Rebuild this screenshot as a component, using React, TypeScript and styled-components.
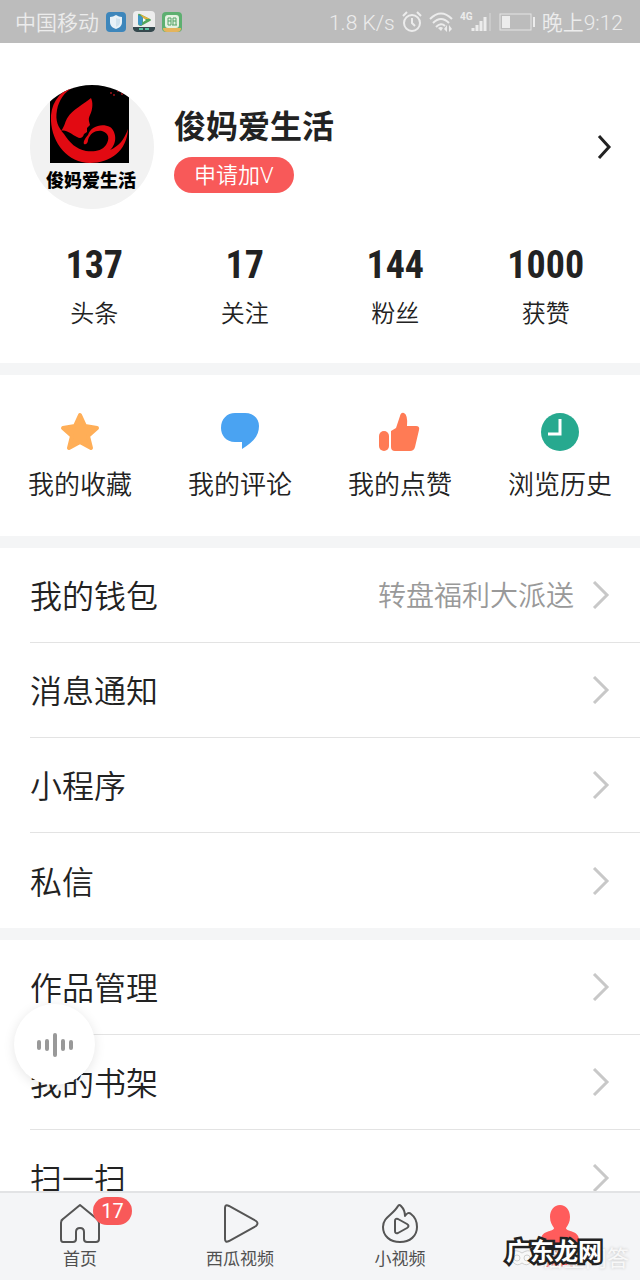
import React from 'react';
import styled, { createGlobalStyle } from 'styled-components';

const GlobalStyle = createGlobalStyle`
  *, *::before, *::after { box-sizing: border-box; }
  body {
    margin: 0;
    background: #fff;
    color: #222;
    font-family: Roboto, 'Noto Sans CJK SC', sans-serif;
  }
  button { font: inherit; color: inherit; border: 0; padding: 0; background: none; cursor: pointer; }
  a { color: inherit; text-decoration: none; }
  h1, p, ul, dl, dd { margin: 0; padding: 0; }
  ul { list-style: none; }
  svg { display: block; flex: none; }
`;

const Screen = styled.div`
  display: flex;
  flex-direction: column;
  height: 100vh;
  overflow: hidden;
`;

const StatusBar = styled.header`
  display: flex;
  align-items: center;
  justify-content: space-between;
  flex: none;
  height: 43px;
  padding: 0 17px 0 15px;
  background: #bcbcbc;
  color: #ececec;
  font-size: 21px;
  line-height: 28px;
  font-weight: 350;
`;

const StatusGroup = styled.div<{ $gap: number }>`
  display: flex;
  align-items: center;
  gap: ${(p) => p.$gap}px;
`;

const StatusText = styled.span`
  padding-top: 2px;
`;

const Content = styled.main`
  flex: 1;
  min-height: 0;
  overflow-y: auto;
  scrollbar-width: none;
  background: #f4f5f6;
`;

const Panel = styled.section`
  background: #fff;
  margin-bottom: 12px;
`;

const ProfilePanel = styled(Panel)`
  height: 320px;
  padding-top: 42px;
`;

const ProfileLink = styled.a`
  display: flex;
  align-items: center;
  padding: 0 28px 0 30px;
`;

const Identity = styled.div`
  flex: 1;
  margin-left: 20px;
`;

const UserName = styled.h1`
  padding-top: 4px;
  font-size: 32px;
  line-height: 44px;
  font-weight: 700;
`;

const ApplyButton = styled.button`
  display: block;
  height: 36px;
  margin-top: 8px;
  padding: 2px 20px 0;
  border-radius: 18px;
  background: #f85959;
  color: #fff;
  font-size: 22px;
  line-height: 34px;
  font-weight: 350;
`;

const Stats = styled.dl`
  display: grid;
  grid-template-columns: repeat(4, 1fr);
  padding: 0 19px;
  margin-top: 32px;
  text-align: center;
`;

const Stat = styled.div`
  display: flex;
  flex-direction: column-reverse;
`;

const StatLabel = styled.dt`
  font-size: 24px;
  line-height: 36px;
  font-weight: 350;
  margin-top: 7px;
`;

const StatValue = styled.dd`
  font-family: 'Roboto Condensed', Roboto, sans-serif;
  font-size: 38px;
  line-height: 48px;
  font-weight: 700;
`;

const Shortcuts = styled(Panel)`
  display: grid;
  grid-template-columns: repeat(4, 1fr);
  height: 161px;
`;

const Shortcut = styled.button`
  display: flex;
  flex-direction: column;
  align-items: center;
  padding-top: 36px;
  font-size: 26px;
  line-height: 40px;
  font-weight: 350;
  gap: 12px;
`;

const Menu = styled.ul`
  background: #fff;
  margin-bottom: 12px;
`;

const MenuItem = styled.li`
  padding-left: 30px;
  &:not(:last-child) a { border-bottom: 1px solid #e3e3e3; }
`;

const MenuLink = styled.a`
  display: flex;
  align-items: center;
  height: 95px;
  padding-right: 30px;
  font-size: 32px;
  line-height: 48px;
  font-weight: 350;
`;

const MenuTitle = styled.span`
  flex: 1;
  padding-top: 4px;
`;

const MenuHint = styled.span`
  padding-top: 4px;
  color: #999;
  font-size: 28px;
  margin-right: 18px;
`;

const TabBar = styled.nav`
  position: relative;
  display: grid;
  grid-template-columns: repeat(4, 1fr);
  flex: none;
  height: 89px;
  border-top: 2px solid #e2e3e5;
  background: #f4f5f7;
`;

const Tab = styled.a<{ $active?: boolean }>`
  display: flex;
  flex-direction: column;
  align-items: center;
  padding-top: 9px;
  gap: 2px;
  font-size: 17px;
  line-height: 26px;
  color: ${(p) => (p.$active ? '#f85959' : '#505050')};
`;

const TabIcon = styled.span`
  position: relative;
`;

const Badge = styled.span`
  position: absolute;
  left: 34px;
  top: -5px;
  width: 39px;
  height: 28px;
  border-radius: 14px;
  background: #f85959;
  color: #fff;
  font-size: 20px;
  line-height: 28px;
  text-align: center;
`;

const VoiceButton = styled.button`
  position: fixed;
  left: 14px;
  bottom: 195px;
  display: grid;
  place-items: center;
  width: 81px;
  height: 81px;
  border-radius: 50%;
  background: #fff;
  box-shadow: 0 2px 12px rgba(0, 0, 0, 0.1);
`;

const SiteMark = styled.span`
  position: absolute;
  right: 38px;
  bottom: 11px;
  color: #fff;
  font-size: 24px;
  line-height: 34px;
  font-weight: 700;
  -webkit-text-stroke: 5px #222;
  paint-order: stroke fill;
`;

const SourceMark = styled.span`
  position: absolute;
  right: 11px;
  bottom: 5px;
  display: flex;
  align-items: center;
  gap: 6px;
  color: #f8f8f8;
  font-size: 22px;
  line-height: 32px;
  text-shadow: 0 0 3px #c4c4c4;
`;

const Avatar = () => (
  <svg width="124" height="124" viewBox="0 0 124 124" role="img" aria-label="俊妈爱生活">
    <defs>
      <clipPath id="round"><circle cx="62" cy="62" r="62" /></clipPath>
      <clipPath id="photo"><rect x="20" y="0" width="79" height="78" /></clipPath>
    </defs>
    <g clipPath="url(#round)">
      <rect width="124" height="124" fill="#f2f2f2" />
      <g clipPath="url(#photo)">
        <rect width="124" height="78" fill="#000" />
        <path d="M42 1C28 8 20 20 21 36C22 58 38 78 60 78C80 78 97 66 98 44C94 55 89 61 80 65C88 58 86 46 80 42C72 38 61 41 58 50C55 53 53 57 54 59C56 60 58 58 58 55C60 48 66 45 72 46C79 48 80 54 76 60C72 66 64 67 56 66C46 64 40 58 34 49C28 42 25 36 27 25C29 15 34 7 44 2Z" fill="#e20a12" />
        <path d="M61 13C54 19 42 25 38 32C35 36 35 41 31 46C36 44 41 49 47 52C50 54 53 53 54 49L57 47L57 43L60 40C59 36 58 34 60 30C63 24 63 17 61 13Z" fill="#e20a12" />
        <g fill="#9e1018"><circle cx="81" cy="8" r="1" /><circle cx="84" cy="10" r="1" /><circle cx="88" cy="6" r="1" /><circle cx="92" cy="9" r="1" /></g>
      </g>
      <text x="61" y="102" textAnchor="middle" fontSize="18" fontWeight="900" fill="#000" fontFamily="'Noto Sans CJK SC', sans-serif">俊妈爱生活</text>
    </g>
  </svg>
);

const Chevron = ({ dark }: { dark?: boolean }) =>
  dark ? (
    <svg width="16" height="26" viewBox="0 0 16 26" fill="none" stroke="#222" strokeWidth="3"><path d="M3 2L13 13L3 24" /></svg>
  ) : (
    <svg width="18" height="28" viewBox="0 0 18 28" fill="none" stroke="#c8c8c8" strokeWidth="3"><path d="M2 1L15 14L2 27" /></svg>
  );

const ShieldApp = () => (
  <svg width="20" height="20" viewBox="0 0 20 20">
    <rect width="20" height="20" rx="4" fill="#3d86bb" />
    <path d="M10 3Q13 5 16 5V10C16 14 13 16 10 17C7 16 4 14 4 10V5Q7 5 10 3Z" fill="#e8f2f8" />
    <path d="M10 6Q12 7 14 7V10C14 13 12 14 10 15Z" fill="#cfe2ee" />
  </svg>
);

const VideoApp = () => (
  <svg width="22" height="21" viewBox="0 0 22 21">
    <rect width="22" height="21" rx="4" fill="#ededed" />
    <path d="M5 4Q5 2 7 3L17 8Q19 9 17 10L8 15Q5 15 5 12Z" fill="#53a65a" />
    <path d="M5 4L10 6L9 14Q5 15 5 12Z" fill="#3e96c6" />
    <path d="M7 3L17 8L11 8Z" fill="#e0b23c" />
    <path d="M10 7L13 9L10 11Z" fill="#fff" />
    <path d="M0 16H22V18Q21 21 18 21H4Q1 21 0 18Z" fill="#35484d" />
    <path d="M6 18H10M12 18H16" stroke="#58c0a0" strokeWidth="2" />
  </svg>
);

const GameApp = () => (
  <svg width="20" height="20" viewBox="0 0 20 20">
    <rect width="20" height="20" rx="4" fill="#5daf70" />
    <path d="M1 16H19Q19 20 15 20H5Q1 20 1 16Z" fill="#e4b45c" />
    <rect x="3" y="3" width="14" height="13" rx="3" fill="#e5f2e2" />
    <path d="M6 6H9V13H6ZM6 9H9M11 6H14V13M11 6V13M11 9H14M10 13H15" fill="none" stroke="#55a468" strokeWidth="1" />
  </svg>
);

const AlarmIcon = () => (
  <svg width="20" height="21" viewBox="0 0 20 21" fill="none" stroke="#ececec" strokeWidth="2">
    <circle cx="10" cy="12" r="8" /><path d="M10 7V12L13 15M1 5L5 1M19 5L15 1" />
  </svg>
);

const WifiIcon = () => (
  <svg width="24" height="20" viewBox="0 0 24 20" fill="none" stroke="#ececec" strokeWidth="2">
    <path d="M1 7Q12 -4 23 7M4 11Q12 3 20 11M7 15Q12 10 16 14" />
    <path d="M9 16Q12 14 14 16L12 19Z" fill="#ececec" stroke="none" />
    <path d="M15 17L18 13V20ZM23 17L20 13V20Z" fill="#ececec" stroke="none" />
  </svg>
);

const SignalIcon = () => (
  <svg width="32" height="22" viewBox="0 0 32 22">
    <text x="0" y="9" fontSize="10" fontWeight="700" fill="#ececec" fontFamily="Roboto, sans-serif">4G</text>
    <path d="M13 17V20M17 14V20M21 10V20M25 6V20" stroke="#ececec" strokeWidth="3" />
    <path d="M30 2V20" stroke="#cacaca" strokeWidth="2" />
  </svg>
);

const BatteryIcon = () => (
  <svg width="36" height="18" viewBox="0 0 36 18">
    <rect x="1" y="1" width="31" height="16" fill="none" stroke="#e4e4e4" strokeWidth="1" />
    <rect x="3" y="3" width="8" height="12" fill="#ececec" />
    <path d="M35 4V14" stroke="#ececec" strokeWidth="2" />
  </svg>
);

const StarIcon = () => (
  <svg width="42" height="42" viewBox="0 0 42 42">
    <path d="M21 4L26 15L38 17L29 25L32 37L21 31L10 37L13 25L4 17L16 15Z" fill="#ffae57" stroke="#ffae57" strokeWidth="4" strokeLinejoin="round" />
  </svg>
);

const CommentIcon = () => (
  <svg width="42" height="42" viewBox="0 0 42 42">
    <path d="M16 2H26C35 2 40 8 40 15C40 25 34 31 23 38V31H16C7 31 2 24 2 17C2 8 8 2 16 2Z" fill="#4aa3f2" />
  </svg>
);

const LikeIcon = () => (
  <svg width="42" height="42" viewBox="0 0 42 42" fill="#ff7b55">
    <rect x="0" y="20" width="10" height="20" rx="5" />
    <path d="M12 20L17 17L21 5Q22 1 25 2Q29 4 28 15H37Q41 15 40 19L36 36Q35 40 31 40H16Q12 40 12 36Z" />
  </svg>
);

const HistoryIcon = () => (
  <svg width="42" height="42" viewBox="0 0 42 42">
    <circle cx="21" cy="21" r="19" fill="#27a98f" /><path d="M21 8V23H9" fill="none" stroke="#fff" strokeWidth="3" />
  </svg>
);

const HomeIcon = () => (
  <svg width="42" height="42" viewBox="0 0 42 42" fill="none" stroke="#555" strokeWidth="2" strokeLinejoin="round">
    <path d="M21 3L38 17Q40 19 40 21V37Q40 40 37 40H28Q25 40 25 37V30Q25 26 21 26Q17 26 17 30V37Q17 40 14 40H4Q2 40 2 37V21Q2 18 4 17Z" />
  </svg>
);

const PlayIcon = () => (
  <svg width="42" height="42" viewBox="0 0 42 42" fill="none" stroke="#555" strokeWidth="2">
    <path d="M6 6Q6 2 10 4L37 19Q40 21 37 24L10 39Q6 41 6 37Z" />
  </svg>
);

const FlameIcon = () => (
  <svg width="42" height="42" viewBox="0 0 42 42" fill="none" stroke="#555" strokeWidth="2" strokeLinejoin="round">
    <path d="M19 4Q20 2 22 4C25 7 26 10 26 14C28 11 30 10 32 12C36 15 38 20 38 25C38 34 31 40 21 40C11 40 4 34 4 25C4 15 14 13 19 4Z" />
    <path d="M16 19Q16 16 19 17L28 22Q31 24 28 26L19 31Q16 32 16 29Z" />
  </svg>
);

const UserIcon = () => (
  <svg width="42" height="42" viewBox="0 0 42 42" fill="#ff5c5c">
    <path d="M21 3C27 3 31 8 31 15C31 20 29 23 27 26C27 30 40 28 40 38V42H2V38C2 28 15 30 15 26C13 23 11 20 11 15C11 8 15 3 21 3Z" />
  </svg>
);

const VoiceIcon = () => (
  <svg width="38" height="24" viewBox="0 0 38 24" stroke="#999" strokeWidth="4" strokeLinecap="round">
    <path d="M3 9V15M11 8V16M19 2V22M27 8V16M35 9V15" />
  </svg>
);

const WukongIcon = () => (
  <svg width="26" height="20" viewBox="0 0 26 20" fill="none" stroke="#cfcfcf">
    <path d="M3 3Q7 0 13 4Q19 0 23 3Q26 8 22 13Q18 18 13 14Q8 18 4 13Q0 8 3 3Z" fill="#f8f8f8" />
    <circle cx="8" cy="9" r="3" /><circle cx="18" cy="9" r="3" />
  </svg>
);

const stats = [
  ['137', '头条'],
  ['17', '关注'],
  ['144', '粉丝'],
  ['1000', '获赞'],
];

const shortcuts = [
  { label: '我的收藏', Icon: StarIcon },
  { label: '我的评论', Icon: CommentIcon },
  { label: '我的点赞', Icon: LikeIcon },
  { label: '浏览历史', Icon: HistoryIcon },
];

const menus: { title: string; hint?: string }[][] = [
  [{ title: '我的钱包', hint: '转盘福利大派送' }, { title: '消息通知' }, { title: '小程序' }, { title: '私信' }],
  [{ title: '作品管理' }, { title: '我的书架' }, { title: '扫一扫' }],
];

const tabs = [
  { label: '首页', Icon: HomeIcon, badge: 17 },
  { label: '西瓜视频', Icon: PlayIcon },
  { label: '小视频', Icon: FlameIcon },
  { label: '我的', Icon: UserIcon, active: true },
];

export default function App() {
  return (
    <Screen>
      <GlobalStyle />
      <StatusBar>
        <StatusGroup $gap={7}>
          <StatusText>中国移动</StatusText>
          <ShieldApp />
          <VideoApp />
          <GameApp />
        </StatusGroup>
        <StatusGroup $gap={7}>
          <StatusText>1.8 K/s</StatusText>
          <AlarmIcon />
          <WifiIcon />
          <SignalIcon />
          <BatteryIcon />
          <StatusText>晚上9:12</StatusText>
        </StatusGroup>
      </StatusBar>
      <Content>
        <ProfilePanel>
          <ProfileLink href="#profile">
            <Avatar />
            <Identity>
              <UserName>俊妈爱生活</UserName>
              <ApplyButton type="button">申请加V</ApplyButton>
            </Identity>
            <Chevron dark />
          </ProfileLink>
          <Stats>
            {stats.map(([value, label]) => (
              <Stat key={label}>
                <StatLabel>{label}</StatLabel>
                <StatValue>{value}</StatValue>
              </Stat>
            ))}
          </Stats>
        </ProfilePanel>
        <Shortcuts>
          {shortcuts.map(({ label, Icon }) => (
            <Shortcut key={label} type="button">
              <Icon />
              {label}
            </Shortcut>
          ))}
        </Shortcuts>
        {menus.map((items) => (
          <Menu key={items[0].title}>
            {items.map(({ title, hint }) => (
              <MenuItem key={title}>
                <MenuLink href="#menu">
                  <MenuTitle>{title}</MenuTitle>
                  {hint && <MenuHint>{hint}</MenuHint>}
                  <Chevron />
                </MenuLink>
              </MenuItem>
            ))}
          </Menu>
        ))}
      </Content>
      <TabBar>
        {tabs.map(({ label, Icon, badge, active }) => (
          <Tab key={label} href="#tab" $active={active}>
            <TabIcon>
              <Icon />
              {badge && <Badge>{badge}</Badge>}
            </TabIcon>
            {label}
          </Tab>
        ))}
        <SourceMark>
          <WukongIcon />
          悟空问答
        </SourceMark>
        <SiteMark>广东龙网</SiteMark>
      </TabBar>
      <VoiceButton type="button" aria-label="语音">
        <VoiceIcon />
      </VoiceButton>
    </Screen>
  );
}
